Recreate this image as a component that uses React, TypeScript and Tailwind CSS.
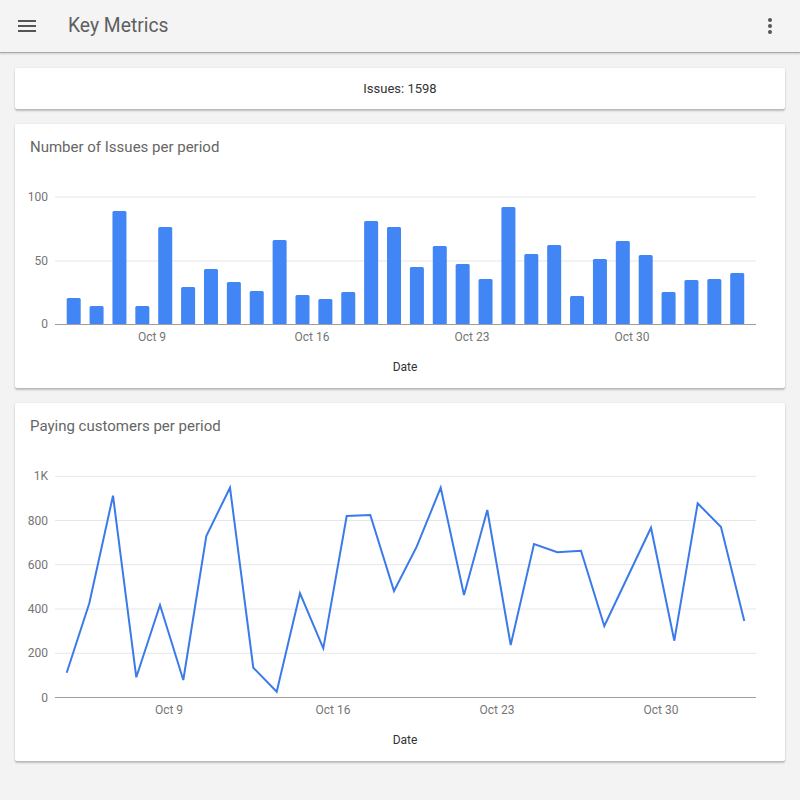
import React from 'react'

// top edge of each bar, in page pixels (axis at y=324)
const barTops = [
  298, 306, 211, 306, 227, 287, 269, 282, 291, 240, 295, 299, 292, 221, 227,
  267, 246, 264, 279, 207, 254, 245, 296, 259, 241, 255, 292, 280, 279, 273,
]

const linePts: [number, number][] = [
  [66.7, 672.7], [89.3, 603.3], [113, 495.7], [136.3, 677.3], [160, 605],
  [183.3, 680], [206.3, 536], [230, 487.7], [253.3, 667.7], [276.7, 691.7],
  [300, 593.3], [323.3, 648.3], [346.7, 516], [370.3, 515], [394, 591],
  [416.7, 546.7], [440.7, 487.7], [464, 595], [487.3, 510], [510.7, 645],
  [534, 544], [557.3, 552.3], [581, 550.7], [604.3, 626], [627.7, 576.7],
  [651, 527.7], [674.3, 640.7], [697.7, 503.3], [721, 527], [744.3, 621],
]

const font = "Roboto, 'Liberation Sans', sans-serif"

function Card({ children, className = '' }: { children: React.ReactNode; className?: string }) {
  return (
    <div
      className={`bg-white rounded-[2px] shadow-[0_2px_2px_rgba(0,0,0,0.22),0_0_2px_rgba(0,0,0,0.1)] ${className}`}
    >
      {children}
    </div>
  )
}

function IssuesChart() {
  return (
    <svg viewBox="15 174 770 214" width={770} height={214} className="block" style={{ fontFamily: font }}>
      {[197, 261].map((y) => (
        <line key={y} x1={55} x2={756} y1={y} y2={y} stroke="#e6e6e6" strokeWidth={1} />
      ))}
      {barTops.map((top, i) => {
        const x = 66.7 + i * 22.88
        return <rect key={i} x={x} y={top} width={14} height={324.5 - top} rx={1.5} fill="#4285f4" />
      })}
      <line x1={55} x2={756} y1={324.5} y2={324.5} stroke="#9e9e9e" strokeWidth={1} />
      <g fontSize={12} fill="#757575" textAnchor="end">
        <text x={48} y={201}>100</text>
        <text x={48} y={265}>50</text>
        <text x={48} y={328}>0</text>
      </g>
      <g fontSize={12} fill="#757575" textAnchor="middle">
        <text x={152} y={341}>Oct 9</text>
        <text x={312} y={341}>Oct 16</text>
        <text x={472} y={341}>Oct 23</text>
        <text x={632} y={341}>Oct 30</text>
      </g>
      <text x={405} y={371} fontSize={12} fill="#333" textAnchor="middle">
        Date
      </text>
    </svg>
  )
}

function CustomersChart() {
  const grid = [476.3, 520.5, 564.7, 609, 653.3]
  const labels = ['1K', '800', '600', '400', '200']
  return (
    <svg viewBox="15 453 770 308" width={770} height={308} className="block" style={{ fontFamily: font }}>
      {grid.map((y) => (
        <line key={y} x1={55} x2={756} y1={y} y2={y} stroke="#e6e6e6" strokeWidth={1} />
      ))}
      <line x1={55} x2={756} y1={697.5} y2={697.5} stroke="#9e9e9e" strokeWidth={1} />
      <polyline
        points={linePts.map((p) => p.join(',')).join(' ')}
        fill="none"
        stroke="#3b7be9"
        strokeWidth={2}
        strokeLinejoin="miter"
      />
      <g fontSize={12} fill="#757575" textAnchor="end">
        {grid.map((y, i) => (
          <text key={y} x={48} y={y + 4}>
            {labels[i]}
          </text>
        ))}
        <text x={48} y={701.5}>0</text>
      </g>
      <g fontSize={12} fill="#757575" textAnchor="middle">
        <text x={169} y={714}>Oct 9</text>
        <text x={333} y={714}>Oct 16</text>
        <text x={497} y={714}>Oct 23</text>
        <text x={661} y={714}>Oct 30</text>
      </g>
      <text x={405} y={744} fontSize={12} fill="#333" textAnchor="middle">
        Date
      </text>
    </svg>
  )
}

export default function App() {
  return (
    <div className="min-h-[800px] bg-[#f3f3f3]" style={{ fontFamily: font }}>
      <header className="h-[53px] flex items-center bg-[#f4f4f4] border-b border-[#a8a8a8] shadow-[0_1px_2px_rgba(0,0,0,0.15)]">
        <button className="ml-[16px] w-[22px] h-[22px] flex items-center justify-center text-[#555]">
          <svg width="18" height="12" viewBox="0 0 18 12">
            <rect x="0" y="0" width="18" height="2" fill="currentColor" />
            <rect x="0" y="5" width="18" height="2" fill="currentColor" />
            <rect x="0" y="10" width="18" height="2" fill="currentColor" />
          </svg>
        </button>
        <h1 className="ml-[30px] text-[19.3px] text-[#5f5f5f] font-normal">Key Metrics</h1>
        <button className="ml-auto mr-[22px] w-[16px] h-[22px] flex items-center justify-center text-[#555]">
          <svg width="4" height="16" viewBox="0 0 4 16">
            <circle cx="2" cy="2" r="2" fill="currentColor" />
            <circle cx="2" cy="8" r="2" fill="currentColor" />
            <circle cx="2" cy="14" r="2" fill="currentColor" />
          </svg>
        </button>
      </header>

      <main className="flex flex-col gap-[15px] px-[15px] pt-[15px] pb-[30px]">
        <Card className="h-[41px] flex items-center justify-center">
          <span className="text-[13px] text-[#333]">Issues: 1598</span>
        </Card>

        <Card className="h-[264px] flex flex-col">
          <div className="h-[50px] px-[15px] pt-[13px] text-[15px] leading-[20px] text-[#666]">
            Number of Issues per period
          </div>
          <IssuesChart />
        </Card>

        <Card className="h-[358px] flex flex-col">
          <div className="h-[50px] px-[15px] pt-[13px] text-[15px] leading-[20px] text-[#666]">
            Paying customers per period
          </div>
          <CustomersChart />
        </Card>
      </main>
    </div>
  )
}
